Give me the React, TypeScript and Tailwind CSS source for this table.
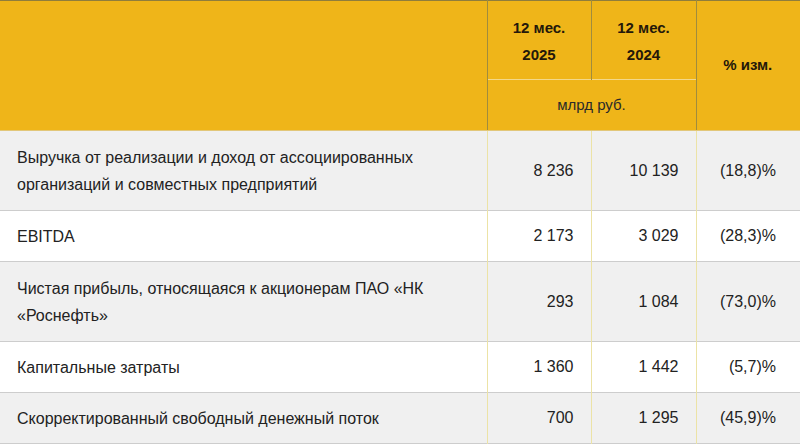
const rows = [
  { name: 'Выручка от реализации и доход от ассоциированных организаций и совместных предприятий', a: '8 236', b: '10 139', c: '(18,8)%', tall: true, gray: true },
  { name: 'EBITDA', a: '2 173', b: '3 029', c: '(28,3)%', tall: false, gray: false },
  { name: 'Чистая прибыль, относящаяся к акционерам ПАО «НК «Роснефть»', a: '293', b: '1 084', c: '(73,0)%', tall: true, gray: true },
  { name: 'Капитальные затраты', a: '1 360', b: '1 442', c: '(5,7)%', tall: false, gray: false },
  { name: 'Скорректированный свободный денежный поток', a: '700', b: '1 295', c: '(45,9)%', tall: false, gray: true },
];

const App = () => {
  return (
    <div className="w-[800px] h-[444px] overflow-hidden bg-white font-['Liberation_Sans',Arial,sans-serif]">
      <table className="w-[800px] table-fixed border-collapse">
        <colgroup>
          <col className="w-[487px]" />
          <col className="w-[104px]" />
          <col className="w-[105px]" />
          <col className="w-[104px]" />
        </colgroup>
        <thead className="bg-[#efb519] text-[#24180a] border-t border-[#8f7d3c]">
          <tr className="h-[79px]">
            <th rowSpan={2} className="border-b border-[#e2c77a]"></th>
            <th className="border-l border-[#a08c3e] text-[15px] font-bold leading-[27px] pt-[1px]">
              12 мес.<br />2025
            </th>
            <th className="border-l border-[#a08c3e] text-[15px] font-bold leading-[27px] pt-[1px]">
              12 мес.<br />2024
            </th>
            <th rowSpan={2} className="border-l border-[#a08c3e] border-b border-b-[#e2c77a] text-[15px] font-bold pr-[1px]">
              % изм.
            </th>
          </tr>
          <tr className="h-[51px]">
            <th colSpan={2} className="border-l border-[#a08c3e] border-t border-t-[#f3d88a] border-b border-b-[#e2c77a] text-[15px] font-normal text-[#2a2a2a]">
              млрд руб.
            </th>
          </tr>
        </thead>
        <tbody className="text-[16px] text-[#222222]">
          {rows.map((r, i) => (
            <tr
              key={i}
              className={`${r.tall ? 'h-[80px]' : 'h-[51px]'} ${r.gray ? 'bg-[#f0f0f0]' : 'bg-white'} border-b border-[#cdcdcd]`}
            >
              <td className="pl-[17px] pr-2 leading-[27px] align-middle">{r.name}</td>
              <td className="border-l border-[#ece3a6] text-right pr-[17px]">{r.a}</td>
              <td className="border-l border-[#ece3a6] text-right pr-[17px]">{r.b}</td>
              <td className="border-l border-[#ece3a6] text-right pr-[24px]">{r.c}</td>
            </tr>
          ))}
        </tbody>
      </table>
    </div>
  );
};

export default App;
